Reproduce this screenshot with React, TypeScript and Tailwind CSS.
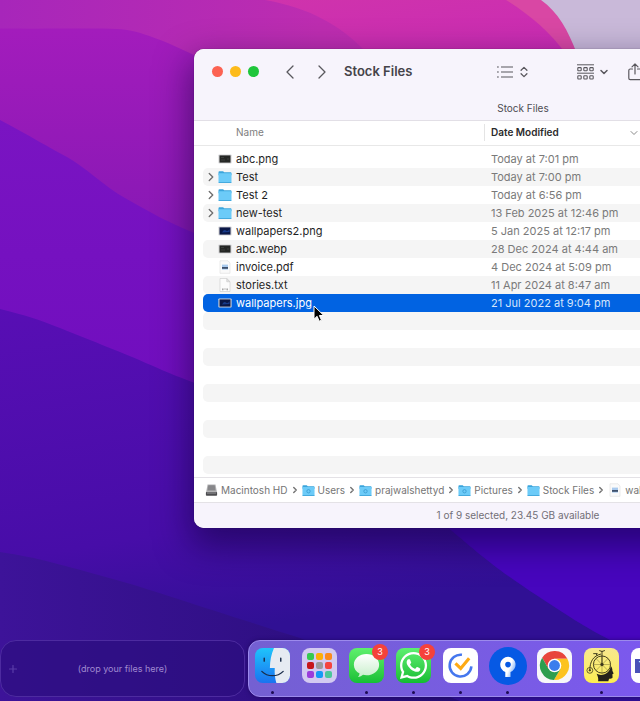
// src/App.tsx
import type { ReactNode } from 'react';
import { FaWhatsapp } from 'react-icons/fa';
import { ChevronDown, ChevronLeft, ChevronRight, ChevronsUpDown, Plus } from 'lucide-react';

type FileKind = 'dark' | 'blue' | 'folder' | 'pdf' | 'txt';

const files: { name: string; date: string; kind: FileKind; selected?: boolean }[] = [
  { name: 'abc.png', date: 'Today at 7:01 pm', kind: 'dark' },
  { name: 'Test', date: 'Today at 7:00 pm', kind: 'folder' },
  { name: 'Test 2', date: 'Today at 6:56 pm', kind: 'folder' },
  { name: 'new-test', date: '13 Feb 2025 at 12:46 pm', kind: 'folder' },
  { name: 'wallpapers2.png', date: '5 Jan 2025 at 12:17 pm', kind: 'blue' },
  { name: 'abc.webp', date: '28 Dec 2024 at 4:44 am', kind: 'dark' },
  { name: 'invoice.pdf', date: '4 Dec 2024 at 5:09 pm', kind: 'pdf' },
  { name: 'stories.txt', date: '11 Apr 2024 at 8:47 am', kind: 'txt' },
  { name: 'wallpapers.jpg', date: '21 Jul 2022 at 9:04 pm', kind: 'blue', selected: true },
];

const emptyRows = Array.from({ length: 9 }, (_, i) => i);

function Wallpaper() {
  return (
    <svg className="absolute inset-0 h-full w-full" viewBox="0 0 640 701" preserveAspectRatio="none" aria-hidden="true">
      <defs>
        <linearGradient id="top" x1="0" y1="0" x2="1" y2="0">
          <stop offset="0" stopColor="#a726ba" />
          <stop offset="0.5" stopColor="#bd2db0" />
          <stop offset="1" stopColor="#c82aae" />
        </linearGradient>
        <linearGradient id="pink" x1="0" y1="0" x2="1" y2="1">
          <stop offset="0" stopColor="#cf33ac" />
          <stop offset="1" stopColor="#c92ab4" />
        </linearGradient>
        <linearGradient id="mid" gradientUnits="userSpaceOnUse" x1="0" y1="29" x2="0" y2="240">
          <stop offset="0" stopColor="#a31cbc" />
          <stop offset="1" stopColor="#8618b4" />
        </linearGradient>
        <linearGradient id="violet" gradientUnits="userSpaceOnUse" x1="0" y1="120" x2="0" y2="390">
          <stop offset="0" stopColor="#7a14c2" />
          <stop offset="1" stopColor="#700ebe" />
        </linearGradient>
        <linearGradient id="indigo" gradientUnits="userSpaceOnUse" x1="0" y1="308" x2="60" y2="660">
          <stop offset="0" stopColor="#580eb4" />
          <stop offset="0.7" stopColor="#470da8" />
          <stop offset="1" stopColor="#301094" />
        </linearGradient>
        <linearGradient id="deep" x1="0" y1="0" x2="1" y2="0">
          <stop offset="0" stopColor="#3d1399" />
          <stop offset="1" stopColor="#260d76" />
        </linearGradient>
      </defs>
      <rect width="640" height="701" fill="url(#top)" />
      <path d="M265 0C310 8 340 25 366 52H640V0Z" fill="url(#pink)" />
      <path d="M506 0C530 15 550 32 566 54H640V0Z" fill="#d947a4" />
      <path d="M541 0C558 12 568 30 577 54H640V0Z" fill="#c9b9d9" />
      <path d="M0 28.500C60 29 95 28 117 29S165 40 220 68V701H0Z" fill="url(#mid)" />
      <path d="M0 120C30 136 50 148 67 157S105 187 125 198S175 228 220 242V701H0Z" fill="url(#violet)" />
      <path d="M0 309C25 315 40 320 60 328S95 342 120 352S175 377 220 392L640 520V701H0Z" fill="url(#indigo)" />
      <path d="M430 512C460 538 480 555 500 570S545 601 570 617S607 638 640 656V500H430Z" fill="#4706be" />
      <path d="M0 552C20 555 35 558 50 562S100 575 127 583S220 613 300 638L460 701H0Z" fill="url(#deep)" />
    </svg>
  );
}

function FolderIcon({ className, emblem }: { className: string; emblem?: boolean }) {
  return (
    <svg className={className} viewBox="0 0 14 14" aria-hidden="true">
      <path d="M.5 2.2q0-.9.9-.9h3.7l1.1 1h6.4q.9 0 .9.9v2H.5z" fill="#3ba5dc" />
      <rect x=".5" y="3.3" width="13" height="9.6" rx=".8" fill="#6ccbf8" />
      <path d="M.5 11.9h13v.3q0 .8-.8.8H1.300q-.8 0-.8-.8z" fill="#45aade" />
      {emblem && <circle cx="7" cy="7.800" r="1.800" fill="none" stroke="#3c9fd4" strokeWidth="1" />}
    </svg>
  );
}

function FileIcon({ kind }: { kind: FileKind }) {
  if (kind === 'folder') return <FolderIcon className="h-3.5 w-3.5 shrink-0" />;
  if (kind === 'txt') {
    return (
      <svg className="h-3.5 w-3.5 shrink-0" viewBox="0 0 14 14" aria-hidden="true">
        <path d="M2 .5h6.700L12 3.800v9.700H2z" fill="#fcfcfc" stroke="#c9c9c9" strokeWidth=".6" />
        <path d="M8.700.5v3.300H12z" fill="#e3e3e3" stroke="#c4c4c4" strokeWidth=".5" />
        <path d="M4 11h1.600M6.300 11h1.400M8.400 11H10M4.800 11v1.400M9.200 11v1.400" stroke="#8b8b8b" strokeWidth=".8" />
      </svg>
    );
  }
  if (kind === 'pdf') {
    return (
      <svg className="h-3.5 w-3.5 shrink-0" viewBox="0 0 14 14" aria-hidden="true">
        <path d="M2 .8h8L12 3v10.300H2z" fill="#fafafa" stroke="#dedede" strokeWidth=".6" />
        <rect x="4" y="4.600" width="6" height="5" fill="#a9caee" />
        <path d="M4 7h6v1.800H4z" fill="#3d4f6b" />
      </svg>
    );
  }
  return (
    <svg className="h-3.5 w-3.5 shrink-0" viewBox="0 0 14 14" aria-hidden="true">
      <rect x=".4" y="2.400" width="13.200" height="9.200" rx=".8" fill="#d6d6d8" />
      <rect x="1.500" y="3.400" width="11" height="7.200" fill={kind === 'blue' ? '#0a1746' : '#252725'} />
      {kind === 'blue' ? (
        <path d="M4 8.500q2-3.500 4-2t3.500-1.500v3z" fill="#173a8a" />
      ) : (
        <path d="M3 5.500h3M3 8h4M9 7h2" stroke="#454945" strokeWidth=".7" />
      )}
    </svg>
  );
}

function DriveIcon() {
  return (
    <svg className="h-3.5 w-[13px] shrink-0" viewBox="0 0 12 14" aria-hidden="true">
      <path d="M2 1.500h8l1.500 8H.5z" fill="#b4b4b6" />
      <path d="M2.800 2.300h6.400l.9 5.200H1.900z" fill="#87878a" />
      <rect x=".4" y="9" width="11.200" height="3.800" rx=".8" fill="#4c4c4f" />
      <path d="M1.500 10h9" stroke="#b9b9bb" strokeWidth=".7" />
    </svg>
  );
}

function ListIcon() {
  return (
    <svg className="h-3.5 w-4" viewBox="0 0 16 14" fill="none" stroke="currentColor" strokeWidth="1.200" aria-hidden="true">
      <path d="M0 2h1.800M0 7h1.800M0 12h1.800M4 2h12M4 7h12M4 12h12" />
    </svg>
  );
}

function GroupIcon() {
  return (
    <svg className="h-4 w-[17px]" viewBox="0 0 17 16" fill="none" stroke="currentColor" aria-hidden="true">
      <path d="M0 .8h17M0 9.200h17" strokeWidth="1" />
      <g strokeWidth="1.100">
        <rect x=".8" y="3.600" width="3.400" height="3.200" rx=".7" />
        <rect x="6.800" y="3.600" width="3.400" height="3.200" rx=".7" />
        <rect x="12.800" y="3.600" width="3.400" height="3.200" rx=".7" />
        <rect x=".8" y="11.800" width="3.400" height="3.200" rx=".7" />
        <rect x="6.800" y="11.800" width="3.400" height="3.200" rx=".7" />
        <rect x="12.800" y="11.800" width="3.400" height="3.200" rx=".7" />
      </g>
    </svg>
  );
}

function ShareIcon() {
  return (
    <svg className="h-[18px] w-3.5" viewBox="0 0 14 18" fill="none" stroke="currentColor" strokeWidth="1.200" strokeLinecap="round" strokeLinejoin="round" aria-hidden="true">
      <path d="M4.500 6H2.200Q.8 6 .8 7.400v7.800q0 1.400 1.400 1.400h9.600q1.400 0 1.400-1.400V7.400Q13.200 6 11.800 6H9.500M7 11V1M4 3.800 7 .8l3 3" />
    </svg>
  );
}

function PathItem({ icon, label, last }: { icon: ReactNode; label: string; last?: boolean }) {
  return (
    <>
      <a href="#" className="flex items-center gap-[3px]">
        {icon}
        {label}
      </a>
      {!last && <ChevronRight className="h-2.5 w-2.5 shrink-0" strokeWidth={3.4} />}
    </>
  );
}

function FinderWindow() {
  return (
    <section
      aria-label="Stock Files"
      className="relative mt-[49px] mr-[-212px] ml-[194px] overflow-hidden rounded-[10px] bg-white shadow-[0_14px_34px_4px_rgba(10,0,50,0.5),0_0_1px_rgba(0,0,0,0.6)]"
    >
      <header className="border-b border-[#e2dfe6] bg-[#f7f4fc] text-[#59575d]">
        <div className="flex h-[45px] items-center pl-[18px]">
          <div className="flex gap-[7px]">
            <button type="button" aria-label="Close" className="h-[11px] w-[11px] rounded-full bg-[#fc6252]" />
            <button type="button" aria-label="Minimise" className="h-[11px] w-[11px] rounded-full bg-[#fdbb1b]" />
            <button type="button" aria-label="Zoom" className="h-[11px] w-[11px] rounded-full bg-[#1fc63b]" />
          </div>
          <button type="button" aria-label="Back" className="ml-[19px]">
            <ChevronLeft className="h-6 w-6" strokeWidth={1.3} />
          </button>
          <button type="button" aria-label="Forward" className="ml-2">
            <ChevronRight className="h-6 w-6" strokeWidth={1.3} />
          </button>
          <h1 className="ml-2.5 w-[153px] text-[13px] font-semibold text-[#454349]">Stock Files</h1>
          <button type="button" aria-label="View" className="flex items-center gap-1">
            <ListIcon />
            <ChevronsUpDown className="h-4 w-3.5" strokeWidth={2.2} />
          </button>
          <button type="button" aria-label="Group" className="ml-[46px] flex items-center gap-1">
            <GroupIcon />
            <ChevronDown className="h-3 w-3" strokeWidth={3} />
          </button>
          <button type="button" aria-label="Share" className="ml-[18px]">
            <ShareIcon />
          </button>
        </div>
        <p className="h-[26px] pt-1.5 text-center text-[10px] leading-4 text-[#4e4c52]">Stock Files</p>
      </header>

      <table className="w-full table-fixed text-left">
        <thead>
          <tr className="h-6 text-[10px]">
            <th className="w-[9px] border-b border-[#e8e8e8] p-0" />
            <th className="w-[281px] border-b border-[#e8e8e8] p-0 pl-[33px] font-normal text-[#7d7d7d]">Name</th>
            <th className="border-b border-[#e8e8e8] p-0 text-[#2b2b2b]">
              <div className="flex h-[17px] w-40 items-center justify-between border-l border-[#e4e4e4] pr-1 pl-1.5 font-semibold">
                Date Modified
                <ChevronDown className="h-3 w-3 text-[#8a8a8a]" strokeWidth={2} />
              </div>
            </th>
          </tr>
          <tr className="h-[5px]">
            <th className="p-0" colSpan={3} />
          </tr>
        </thead>
        <tbody className="text-[11px] leading-[18px]">
          {files.map((file, i) => {
            const bg = file.selected ? 'bg-[#0163e2]' : i % 2 ? 'bg-[#f5f5f5]' : '';
            return (
              <tr key={file.name} className="h-[18px]">
                <td className="p-0" />
                <td className={`rounded-l-[5px] p-0 ${bg} ${file.selected ? 'text-white' : 'text-[#1f1f1f]'}`}>
                  <div className="flex items-center">
                    <span className="flex w-[15px] justify-center text-[#727272]">
                      {file.kind === 'folder' && <ChevronRight className="h-3.5 w-3.5" strokeWidth={2.4} />}
                    </span>
                    <FileIcon kind={file.kind} />
                    <span className="ml-1">{file.name}</span>
                  </div>
                </td>
                <td className={`p-0 pl-[7px] ${bg} ${file.selected ? 'text-[#d5e5fb]' : 'text-[#7a7a7a]'}`}>{file.date}</td>
              </tr>
            );
          })}
          {emptyRows.map((row) => (
            <tr key={row} className="h-[18px]">
              <td className="p-0" />
              <td className={`rounded-l-[5px] p-0 ${row % 2 ? '' : 'bg-[#f5f5f5]'}`} />
              <td className={`p-0 ${row % 2 ? '' : 'bg-[#f5f5f5]'}`} />
            </tr>
          ))}
        </tbody>
      </table>

      <nav aria-label="Path" className="mt-[3px] flex h-[26px] items-center gap-0.5 border-y border-[#e4e2e6] pl-[11px] text-[10px] whitespace-nowrap text-[#757575]">
        <PathItem icon={<DriveIcon />} label="Macintosh HD" />
        <PathItem icon={<FolderIcon className="h-[13px] w-[13px] shrink-0" emblem />} label="Users" />
        <PathItem icon={<FolderIcon className="h-[13px] w-[13px] shrink-0" emblem />} label="prajwalshettyd" />
        <PathItem icon={<FolderIcon className="h-[13px] w-[13px] shrink-0" emblem />} label="Pictures" />
        <PathItem icon={<FolderIcon className="h-[13px] w-[13px] shrink-0" />} label="Stock Files" />
        <PathItem icon={<FileIcon kind="pdf" />} label="wallpapers.jpg" last />
      </nav>
      <footer className="h-[25px] bg-[#f7f4fc] pr-2.5 text-center text-[10px] leading-6 text-[#726f77]">
        1 of 9 selected, 23.45 GB available
      </footer>
    </section>
  );
}

function FinderApp() {
  return (
    <svg className="h-full w-full" viewBox="0 0 36 36" aria-hidden="true">
      <defs>
        <linearGradient id="face" x1="0" y1="0" x2="0" y2="1">
          <stop offset="0" stopColor="#1fc4fb" />
          <stop offset="1" stopColor="#1a73f0" />
        </linearGradient>
        <clipPath id="face-clip">
          <rect width="36" height="36" rx="8" />
        </clipPath>
      </defs>
      <g clipPath="url(#face-clip)">
        <rect width="36" height="36" fill="url(#face)" />
        <path d="M19.500 0C16.500 7 15.500 13 15.300 20.500h5C20 26 20.500 31 22 36H36V0z" fill="#e6ebf2" />
      </g>
      <path d="M9.500 10.500v3M26.500 10.500v3" stroke="#1a2c4a" strokeWidth="1.500" strokeLinecap="round" />
      <path d="M7 24c6 6 16 6 22 0" fill="none" stroke="#1a2c4a" strokeWidth="1.300" strokeLinecap="round" />
    </svg>
  );
}

const tiles = ['#35c950', '#fcae08', '#fb8a1d', '#c6161b', '#9a9a9c', '#f5443f', '#9a3ddb', '#149af5', '#4bc79a'];

function LaunchpadApp() {
  return (
    <div className="grid h-full w-full grid-cols-3 content-center justify-items-center gap-0.5 rounded-lg bg-[#d3caf1] px-[5px]">
      {tiles.map((color) => (
        <span key={color} className="h-[7px] w-[7px] rounded-xs" style={{ backgroundColor: color }} />
      ))}
    </div>
  );
}

function MessagesApp() {
  return (
    <div className="h-full w-full rounded-lg bg-linear-to-b from-[#5df06c] to-[#13c035]">
      <svg className="h-full w-full" viewBox="0 0 36 36" aria-hidden="true">
        <defs>
          <linearGradient id="bubble" x1="0" y1="0" x2="0" y2="1">
            <stop offset="0" stopColor="#fff" />
            <stop offset="1" stopColor="#c8efcb" />
          </linearGradient>
        </defs>
        <path d="M18 6.200c-7.200 0-13 4.800-13 10.900 0 3.900 2.300 7.200 5.900 9.100-.2 1.500-.8 2.700-1.700 3.600 2.100-.2 3.900-1 5.200-2.200 1.100.3 2.300.4 3.600.4 7.200 0 13-4.800 13-10.900S25.200 6.200 18 6.200z" fill="url(#bubble)" />
      </svg>
    </div>
  );
}

function WhatsAppApp() {
  return (
    <div className="flex h-full w-full items-center justify-center rounded-lg bg-linear-to-b from-[#5cf070] to-[#10bd32] text-white">
      <FaWhatsapp className="h-[31px] w-[31px]" />
    </div>
  );
}

function TickApp() {
  return (
    <div className="h-full w-full rounded-lg bg-white">
      <svg className="h-full w-full" viewBox="0 0 36 36" fill="none" aria-hidden="true">
        <path d="M19.500 7A11.200 11.200 0 1 0 29.200 19" stroke="#4577ee" strokeWidth="2.600" />
        <path d="m12.800 15.800 5.400 5.200 8.700-10.500" stroke="#fdaa14" strokeWidth="3.200" />
      </svg>
    </div>
  );
}

function SourceApp() {
  return (
    <svg className="h-[38px] w-[38px] shrink-0" viewBox="0 0 38 38" aria-hidden="true">
      <defs>
        <linearGradient id="branch" x1="0.4" y1="0.3" x2="1" y2="0.6">
          <stop offset="0.4" stopColor="#fff" />
          <stop offset="1" stopColor="#7fb0f8" />
        </linearGradient>
      </defs>
      <circle cx="19" cy="19" r="19" fill="#0659e4" />
      <path d="M19 9.800a7.800 7.800 0 0 0-2.700 15.100V30h5.200v-5.100A7.800 7.800 0 0 0 19 9.800z" fill="url(#branch)" />
      <circle cx="19" cy="17.600" r="2.800" fill="#0659e4" />
    </svg>
  );
}

function ChromeApp() {
  return (
    <div className="h-full w-full rounded-lg bg-[#f7f7f9]">
      <svg className="h-full w-full" viewBox="-18 -18 36 36" aria-hidden="true">
        <path d="M-12.700-7.990A15 15 0 0 1 13.270-7L0-7-6.060 3.500Z" fill="#e8453c" />
        <path d="M13.270-7A15 15 0 0 1-.57 14.990L6.060 3.500 0-7Z" fill="#fcc31e" />
        <path d="M-.57 14.990A15 15 0 0 1-12.700-7.990L-6.060 3.500 6.060 3.500Z" fill="#2e9e4f" />
        <circle r="7" fill="#fff" />
        <circle r="5.600" fill="#3b7ded" />
      </svg>
    </div>
  );
}

function BicycleApp() {
  return (
    <div className="h-full w-full rounded-lg bg-linear-to-b from-[#f8e88e] to-[#fdee4e]">
      <svg className="h-full w-full" viewBox="0 0 36 36" fill="none" stroke="#3f3a1c" aria-hidden="true">
        <path d="M13 26.500c3 1.800 7 1.500 10-.5 2.500-1.800 4.200-4.500 4.500-7.600 1.300 1.400 1.800 3 1.700 5l1.300 2.800-1.300.7.2 3.300c-.3 1.400-1.600 1.500-3.600 1.300l-.8 2.600H14.500c.6-2.800-.4-5-1.500-7.600z" fill="#26231a" stroke="none" />
        <circle cx="18.500" cy="17" r="8.800" strokeWidth="1" />
        <path d="M18.500 8.200v17.600M9.700 17h17.600M12.300 10.800l12.400 12.400M24.700 10.800 12.300 23.200" strokeWidth=".35" />
        <circle cx="18.500" cy="17" r="1.300" fill="#3f3a1c" />
        <circle cx="6" cy="23" r="3" strokeWidth=".8" />
        <circle cx="6" cy="23" r=".7" fill="#3f3a1c" />
        <path d="M6 23C6 14 9.500 8 17.500 6.200M18.500 17V3M15.700 2.600l2.800 1 3-1M9.500 5.800h4.500M12.500 6l1.200 2" strokeWidth="1" />
      </svg>
    </div>
  );
}

function TeamsApp() {
  return (
    <div className="flex h-full w-full items-center rounded-lg bg-white pl-1">
      <span className="flex h-3.5 w-3.5 items-center justify-center bg-[#4a52b8] text-[10px] font-bold text-white">T</span>
    </div>
  );
}

const apps: { name: string; icon: ReactNode; badge?: number; running?: boolean }[] = [
  { name: 'Finder', icon: <FinderApp />, running: true },
  { name: 'Launchpad', icon: <LaunchpadApp /> },
  { name: 'Messages', icon: <MessagesApp />, badge: 3, running: true },
  { name: 'WhatsApp', icon: <WhatsAppApp />, badge: 3, running: true },
  { name: 'TickTick', icon: <TickApp />, running: true },
  { name: 'Sourcetree', icon: <SourceApp />, running: true },
  { name: 'Chrome', icon: <ChromeApp /> },
  { name: 'Bicycle', icon: <BicycleApp />, running: true },
  { name: 'Teams', icon: <TeamsApp /> },
];

function Dock() {
  return (
    <nav aria-label="Dock" className="flex h-[57px] shrink-0 gap-3 rounded-xl border border-[#9c8aec] bg-linear-to-r from-[#7460d2] to-[#7c58f0] px-1.5 pt-[7px] shadow-[0_0_4px_rgba(20,0,80,0.6)]">
      {apps.map((app) => (
        <button key={app.name} type="button" aria-label={app.name} className="relative flex w-[35px] flex-col items-center">
          <span className="flex h-[35px] w-[35px] items-center justify-center">{app.icon}</span>
          {app.badge && (
            <span className="absolute -top-1 -right-1 flex h-4 w-4 items-center justify-center rounded-full bg-[#f5423b] text-[9px] text-white">
              {app.badge}
            </span>
          )}
          {app.running && <span className="mt-2 h-[3px] w-[3px] rounded-full bg-[#1c0b52]" />}
        </button>
      ))}
    </nav>
  );
}

export default function App() {
  return (
    <main className="relative flex min-h-screen flex-col justify-between gap-10 overflow-hidden bg-[#3b0fa0] font-['Inter',sans-serif]">
      <Wallpaper />
      <FinderWindow />
      <div className="relative flex gap-[3px] pb-1">
        <div className="flex h-[57px] w-[245px] shrink-0 items-center rounded-2xl border border-[#4d2ba0] bg-[#2c0e80]/70 px-1.5 text-[#a08ad0]">
          <button type="button" aria-label="Add files" className="text-[#5a3ca8]">
            <Plus className="h-3 w-3" strokeWidth={2.4} />
          </button>
          <p className="flex-1 pr-3 text-center text-[9px]">(drop your files here)</p>
        </div>
        <Dock />
      </div>
      <svg className="absolute top-[305px] left-[313px] h-[18px] w-3" viewBox="0 0 12 18" aria-hidden="true">
        <path d="M1 1v13.200l3.100-2.900 2.100 4.900 2.300-1-2.100-4.700h4.400z" fill="#000" stroke="#fff" strokeWidth="1" />
      </svg>
    </main>
  );
}
